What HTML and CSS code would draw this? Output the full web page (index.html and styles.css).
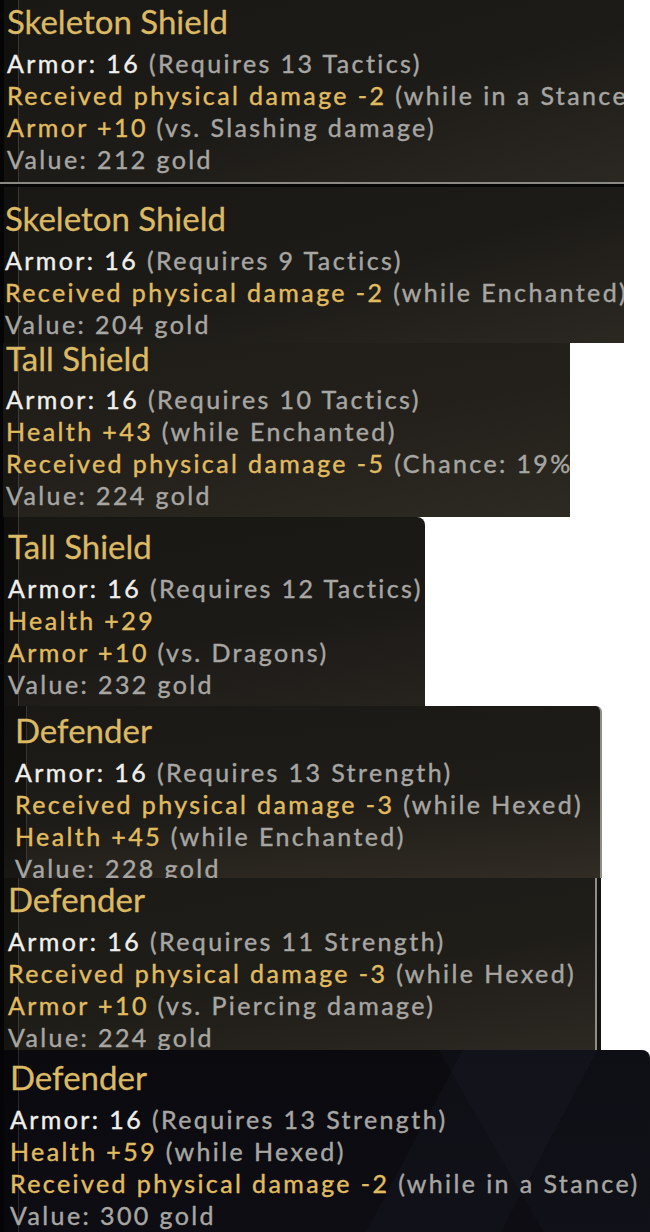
FILE: index.html
```html
<!DOCTYPE html>
<html lang="en">
<head>
    <meta charset="UTF-8">
    <meta name="viewport" content="width=device-width, initial-scale=1.0">
    <title>Shield Tooltips</title>
    <link rel="stylesheet" href="styles.css">
</head>
<body>

    <!-- Skeleton Shield, 13 Tactics -->
    <div class="tip tip-1">
        <div class="name">Skeleton Shield</div>
        <div class="line"><span class="base">Armor: 16</span> <span class="note">(Requires 13 Tactics)</span></div>
        <div class="line mod">Received physical damage -2 <span class="note">(while in a Stance)</span></div>
        <div class="line mod">Armor +10 <span class="note">(vs. Slashing damage)</span></div>
        <div class="line value">Value: 212 gold</div>
    </div>

    <!-- Skeleton Shield, 9 Tactics -->
    <div class="tip tip-2">
        <div class="name">Skeleton Shield</div>
        <div class="line"><span class="base">Armor: 16</span> <span class="note">(Requires 9 Tactics)</span></div>
        <div class="line mod">Received physical damage -2 <span class="note">(while Enchanted)</span></div>
        <div class="line value">Value: 204 gold</div>
    </div>

    <!-- Tall Shield, 10 Tactics -->
    <div class="tip tip-3">
        <div class="name">Tall Shield</div>
        <div class="line"><span class="base">Armor: 16</span> <span class="note">(Requires 10 Tactics)</span></div>
        <div class="line mod">Health +43 <span class="note">(while Enchanted)</span></div>
        <div class="line mod">Received physical damage -5 <span class="note">(Chance: 19%)</span></div>
        <div class="line value">Value: 224 gold</div>
    </div>

    <!-- Tall Shield, 12 Tactics -->
    <div class="tip tip-4">
        <div class="name">Tall Shield</div>
        <div class="line"><span class="base">Armor: 16</span> <span class="note">(Requires 12 Tactics)</span></div>
        <div class="line mod">Health +29</div>
        <div class="line mod">Armor +10 <span class="note">(vs. Dragons)</span></div>
        <div class="line value">Value: 232 gold</div>
    </div>

    <!-- Defender, 13 Strength -->
    <div class="tip tip-5">
        <div class="name">Defender</div>
        <div class="line"><span class="base">Armor: 16</span> <span class="note">(Requires 13 Strength)</span></div>
        <div class="line mod">Received physical damage -3 <span class="note">(while Hexed)</span></div>
        <div class="line mod">Health +45 <span class="note">(while Enchanted)</span></div>
        <div class="line value">Value: 228 gold</div>
    </div>

    <!-- Defender, 11 Strength -->
    <div class="tip tip-6">
        <div class="name">Defender</div>
        <div class="line"><span class="base">Armor: 16</span> <span class="note">(Requires 11 Strength)</span></div>
        <div class="line mod">Received physical damage -3 <span class="note">(while Hexed)</span></div>
        <div class="line mod">Armor +10 <span class="note">(vs. Piercing damage)</span></div>
        <div class="line value">Value: 224 gold</div>
    </div>

    <!-- Defender, 13 Strength, stance -->
    <div class="tip tip-7">
        <div class="name">Defender</div>
        <div class="line"><span class="base">Armor: 16</span> <span class="note">(Requires 13 Strength)</span></div>
        <div class="line mod">Health +59 <span class="note">(while Hexed)</span></div>
        <div class="line mod">Received physical damage -2 <span class="note">(while in a Stance)</span></div>
        <div class="line value">Value: 300 gold</div>
    </div>

</body>
</html>
```

FILE: styles.css
```css
body {
    margin: 0;
    background-color: #fff;
    font-family: "Lato", "Open Sans", sans-serif;
}
.tip {
    position: relative;
    overflow-x: clip;
    white-space: nowrap;
    box-sizing: border-box;
    background:
        linear-gradient(to right, #050505 0 4px, rgba(0, 0, 0, 0.35) 4px 18px, rgba(120, 117, 108, 0.35) 18px 19px, transparent 19px),
        linear-gradient(165deg, #191815 0%, #1d1b17 55%, #2b2822 100%);
}
.name {
    font-size: 33px;
    line-height: 28px;
    color: #dcb963;
    margin-bottom: 12px;
    -webkit-text-stroke: 0.3px currentColor;
}
.line {
    font-size: 25px;
    line-height: 32px;
    letter-spacing: 2.4px;
    -webkit-text-stroke: 0.4px currentColor;
}
.base {
    color: #f0efeb;
}
.mod {
    color: #e1bc5f;
}
.note,
.value {
    color: #a7a6a2;
}

/* each capture has its own size and crop */
.tip-1 {
    width: 624px;
    height: 184px;
    padding: 7px 0 0 7px;
    border-bottom: 2px solid #8b8983;
}
.tip-2 {
    width: 624px;
    height: 159px;
    padding: 17px 0 0 5px;
    border-top: 3px solid #060606;
}
.tip-3 {
    width: 570px;
    height: 174px;
    padding: 1px 0 0 6px;
    background:
        linear-gradient(to right, #050505 0 3px, rgba(0, 0, 0, 0.3) 3px 18px, rgba(120, 117, 108, 0.35) 18px 19px, transparent 19px),
        linear-gradient(170deg, #1f1d18 0%, #23201b 50%, #2d2a23 100%);
}
.tip-3 .name {
    margin-bottom: 11px;
}
.tip-4 {
    width: 425px;
    height: 189px;
    padding: 15px 0 0 8px;
    border-top-right-radius: 8px;
    background:
        linear-gradient(to right, #050505 0 4px, rgba(0, 0, 0, 0.35) 4px 18px, rgba(120, 117, 108, 0.35) 18px 19px, transparent 19px),
        linear-gradient(170deg, #181714 0%, #1c1a17 60%, #26231e 100%);
}
.tip-5 {
    width: 602px;
    height: 172px;
    padding: 10px 0 0 15px;
    overflow-y: clip;
    border-top-right-radius: 6px;
    border-right: 2px solid #8f8d86;
    background:
        linear-gradient(to right, #050505 0 4px, rgba(0, 0, 0, 0.35) 4px 26px, rgba(120, 117, 108, 0.3) 26px 27px, transparent 27px),
        linear-gradient(175deg, #1a1915 0%, #1e1c18 55%, #312c24 100%);
}
.tip-6 {
    width: 601px;
    height: 172px;
    padding: 7px 0 0 8px;
    overflow-y: clip;
    border-right: 4px solid #141310;
    box-shadow: inset -2px 0 0 #8f8d86;
    background:
        linear-gradient(to right, #050505 0 4px, rgba(0, 0, 0, 0.35) 4px 18px, rgba(120, 117, 108, 0.35) 18px 19px, transparent 19px),
        linear-gradient(170deg, #1b1a16 0%, #1f1d18 55%, #2c2822 100%);
}
.tip-7 {
    width: 650px;
    height: 182px;
    padding: 13px 0 0 10px;
    border-top-right-radius: 8px;
    background:
        linear-gradient(to right, #050507 0 4px, rgba(0, 0, 0, 0.3) 4px 18px, rgba(110, 110, 120, 0.3) 18px 19px, transparent 19px),
        linear-gradient(118deg, transparent 0 62%, rgba(40, 42, 56, 0.15) 62% 80%, transparent 80%),
        linear-gradient(60deg, transparent 0 72%, rgba(30, 32, 44, 0.2) 72%),
        linear-gradient(180deg, #0a0a0f 0%, #0d0d13 100%);
}
```
